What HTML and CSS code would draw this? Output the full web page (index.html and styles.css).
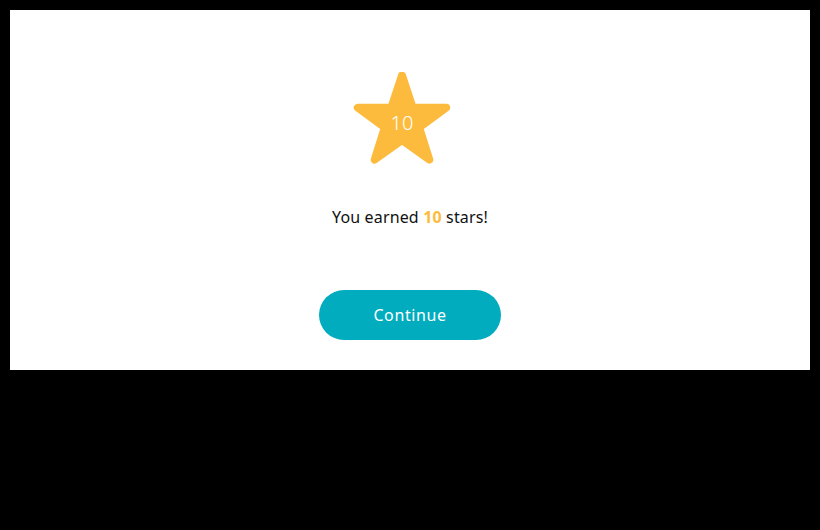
FILE: index.html
```html
<!DOCTYPE html>
<html>
<head>
<meta charset="utf-8">
<link rel="stylesheet" href="styles.css">
</head>
<body>
<div class="panel">
  <div class="star">
    <svg class="star-svg" width="104" height="96" viewBox="-52 -50 104 96">
      <polygon points="0.00,-46.50 10.58,-14.56 44.22,-14.37 17.12,5.56 27.33,37.62 0.00,18.00 -27.33,37.62 -17.12,5.56 -44.22,-14.37 -10.58,-14.56" fill="#FDBB3D" stroke="#FDBB3D" stroke-width="8" stroke-linejoin="round"/>
    </svg>
    <span class="star-count">10</span>
  </div>
  <p class="message">You earned <strong class="highlight">10</strong> stars!</p>
  <button class="continue">Continue</button>
</div>
</body>
</html>
```
FILE: styles.css
```css
html, body {
  margin: 0;
  padding: 0;
  background: #000;
}
body {
  padding: 10px;
  width: 800px;
  height: 510px;
  font-family: "Noto Sans", "Open Sans", sans-serif;
}
.panel {
  background: #fff;
  height: 360px;
  box-sizing: border-box;
  padding-top: 62px;
  display: flex;
  flex-direction: column;
  align-items: center;
}
.star {
  position: relative;
  width: 104px;
  height: 96px;
  margin-right: 16px;
}
.star-svg {
  display: block;
}
.star-count {
  position: absolute;
  left: 0;
  right: 0;
  top: 38px;
  text-align: center;
  color: #fff;
  font-size: 20px;
  line-height: 26px;
  font-weight: 300;
}
.message {
  margin: 39px 0 0;
  font-size: 16px;
  line-height: 20px;
  color: #111;
  letter-spacing: 0.15px;
}
.highlight {
  color: #FDBB3D;
  font-weight: 700;
}
.continue {
  margin-top: 63px;
  width: 182px;
  height: 50px;
  border: none;
  border-radius: 25px;
  background: #00ACBD;
  color: #fff;
  font-family: inherit;
  font-size: 16px;
  font-weight: 400;
  letter-spacing: 0.6px;
  padding: 0;
  cursor: pointer;
}
```
